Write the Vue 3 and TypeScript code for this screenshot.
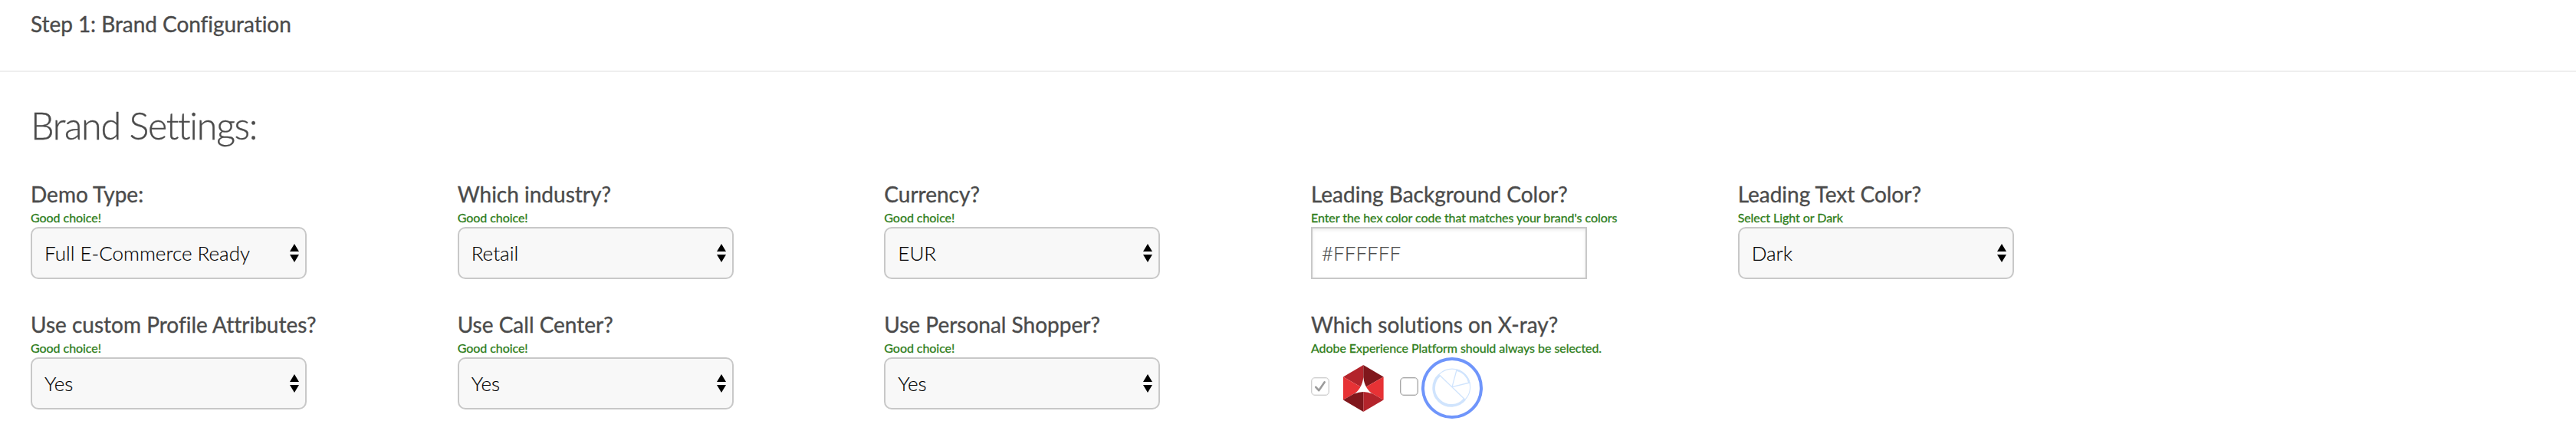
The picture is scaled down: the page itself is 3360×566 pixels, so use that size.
<script setup lang="ts">
interface Field {
  label: string
  hint: string
  kind: 'select' | 'text' | 'solutions'
  value?: string
}

const fields: Field[] = [
  { label: 'Demo Type:', hint: 'Good choice!', kind: 'select', value: 'Full E-Commerce Ready' },
  { label: 'Which industry?', hint: 'Good choice!', kind: 'select', value: 'Retail' },
  { label: 'Currency?', hint: 'Good choice!', kind: 'select', value: 'EUR' },
  { label: 'Leading Background Color?', hint: "Enter the hex color code that matches your brand's colors", kind: 'text', value: '#FFFFFF' },
  { label: 'Leading Text Color?', hint: 'Select Light or Dark', kind: 'select', value: 'Dark' },
  { label: 'Use custom Profile Attributes?', hint: 'Good choice!', kind: 'select', value: 'Yes' },
  { label: 'Use Call Center?', hint: 'Good choice!', kind: 'select', value: 'Yes' },
  { label: 'Use Personal Shopper?', hint: 'Good choice!', kind: 'select', value: 'Yes' },
  { label: 'Which solutions on X-ray?', hint: 'Adobe Experience Platform should always be selected.', kind: 'solutions' },
]
</script>

<template>
  <main class="page">
    <header class="step"><span>Step 1: Brand Configuration</span></header>
    <h1 class="title"><span>Brand Settings:</span></h1>
    <section class="grid">
      <div v-for="f in fields" :key="f.label" class="field">
        <div class="label"><span>{{ f.label }}</span></div>
        <div class="hint"><span>{{ f.hint }}</span></div>
        <div v-if="f.kind === 'select'" class="select">
          <span>{{ f.value }}</span>
          <svg class="arrows" width="12" height="24" viewBox="0 0 12 24">
            <path d="M6 0L12 10H0Z M0 14H12L6 24Z" />
          </svg>
        </div>
        <div v-else-if="f.kind === 'text'" class="text"><span>{{ f.value }}</span></div>
        <div v-else class="solutions">
          <span class="check disabled">
            <svg width="24" height="24" viewBox="0 0 24 24">
              <path d="M6.3 12.8L10.2 17.2L17.6 6.4" fill="none" stroke="#9b9b9b" stroke-width="2.6" stroke-linecap="round" stroke-linejoin="round" />
            </svg>
          </span>
          <svg class="hex" width="53" height="61" viewBox="0 0 53 61">
            <path d="M26.3 0V30.5L0 15.4Z" fill="#b3242b" />
            <path d="M26.3 0L52.6 15.4L26.3 30.5Z" fill="#80171c" />
            <path d="M0 15.4L26.3 30.5L0 45.6Z" fill="#e73235" />
            <path d="M52.6 15.4V45.6L26.3 30.5Z" fill="#e73235" />
            <path d="M0 45.6L26.3 30.5V61Z" fill="#80171c" />
            <path d="M26.3 30.5L52.6 45.6L26.3 61Z" fill="#b3242b" />
            <path d="M26.3 16C27 24 31 33 38 37.6Q26.3 32.4 14.6 37.6C21.6 33 25.6 24 26.3 16Z" fill="#fff" />
          </svg>
          <span class="check open"></span>
          <svg class="pie" width="80" height="80" viewBox="0 0 80 80">
            <circle cx="40" cy="40" r="38" fill="#fff" stroke="#6f95fb" stroke-width="4" />
            <g fill="none" stroke="#d0e4fd">
              <circle cx="40" cy="38.7" r="23.6" stroke-width="1.1" />
              <path d="M23.3 22.8L57 55.2M40 38.7L46 16.3M40 38.7L63 33" stroke-width="1.3" />
              <path d="M23.6 23.2A22.8 22.800 0 1 0 56.500 54.600" stroke-width="3.600" />
              <path d="M46 16.700A22.800 22.800 0 0 1 62.400 33.300" stroke-width="2.400" />
            </g>
          </svg>
        </div>
      </div>
    </section>
  </main>
</template>

<style>
body {
  margin: 0;
  background: #fff;
}
</style>

<style scoped>
.page {
  height: 566px;
  box-sizing: border-box;
  overflow: hidden;
  background: #fff;
  color: #4b4b4b;
  font-family: Lato, 'Open Sans', sans-serif;
  font-variant-ligatures: none;
}
.step {
  box-sizing: border-box;
  height: 94px;
  padding: 13px 40px 0;
  border-bottom: 2px solid #efefef;
  font-size: 28px;
  line-height: 36px;
  letter-spacing: -0.05px;
  -webkit-text-stroke: 0.35px currentColor;
}
.title {
  box-sizing: border-box;
  margin: 0;
  padding: 39px 40px 0;
  height: 138px;
  font-size: 48.5px;
  line-height: 60px;
  font-weight: 300;
  letter-spacing: -1.35px;
  -webkit-text-stroke: 0.35px currentColor;
}
.grid {
  display: grid;
  grid-template-columns: repeat(5, 556.66px);
  grid-auto-rows: 170px;
  padding-left: 40px;
}
.field {
  box-sizing: border-box;
  padding-top: 4px;
}
.label {
  height: 32px;
  line-height: 34px;
  font-size: 28px;
  white-space: nowrap;
  -webkit-text-stroke: 0.35px currentColor;
}
.hint {
  box-sizing: border-box;
  height: 28px;
  padding-top: 6px;
  line-height: 20px;
  font-size: 16px;
  letter-spacing: -0.05px;
  color: #2e7d1a;
  white-space: nowrap;
  -webkit-text-stroke: 0.3px currentColor;
}
.select,
.text {
  display: flex;
  align-items: center;
  justify-content: space-between;
  box-sizing: border-box;
  width: 360px;
  height: 68px;
  border: 2px solid #c8c8c8;
  font-size: 26px;
  font-weight: 300;
  -webkit-text-stroke: 0.15px currentColor;
}
.select {
  padding: 0 8px 0 16px;
  border-radius: 10px;
  background: #f8f8f8;
  color: #000;
}
.text {
  padding: 0 12px;
  background: #fff;
  box-shadow: inset 0 2px 4px rgba(0, 0, 0, 0.08);
}
.solutions {
  display: flex;
  align-items: flex-start;
}
.check {
  box-sizing: border-box;
  width: 24px;
  height: 24px;
  margin-top: 26px;
  border: 1px solid #a6a6a6;
  border-radius: 5px;
  box-shadow: inset 0 0 0 1px #dedede;
}
.check.disabled {
  border-color: #cfcfcf;
  box-shadow: inset 0 0 0 1px #ececec;
}
.check.disabled svg {
  display: block;
  margin: -1px;
}
.hex {
  margin: 10px 0 0 18.5px;
}
.check.open {
  margin-left: 20.5px;
}
.pie {
  margin-left: 4px;
}
</style>
